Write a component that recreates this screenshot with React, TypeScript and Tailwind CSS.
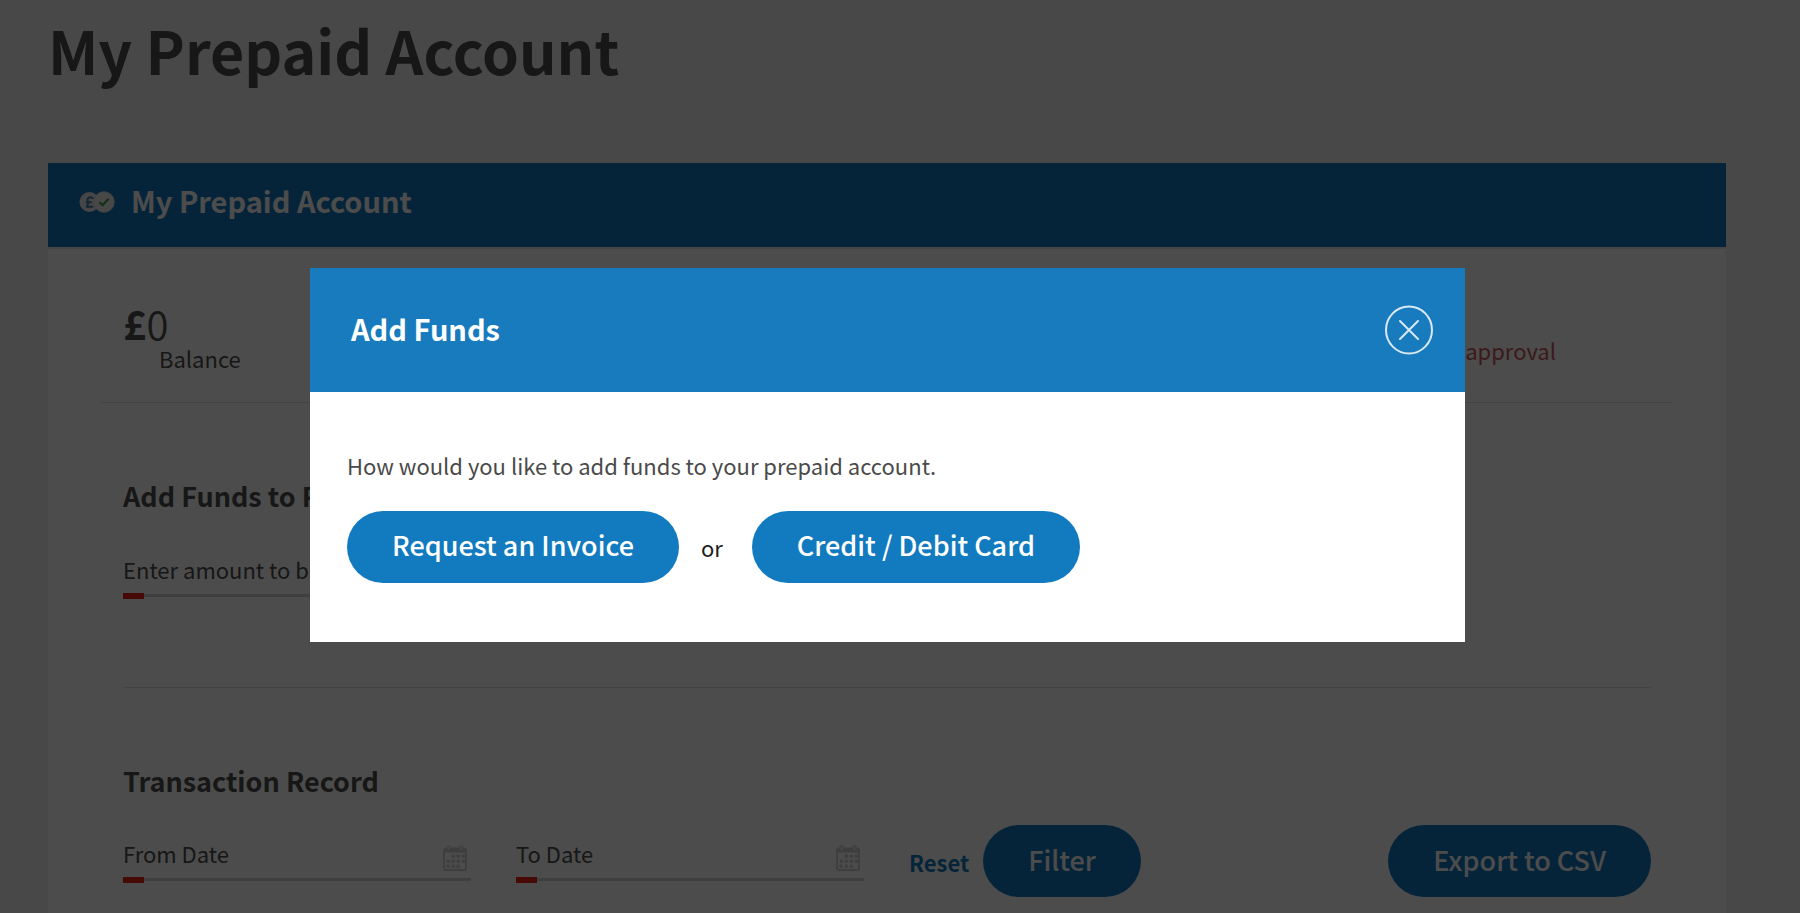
import React from "react";

const pill =
  "h-[72px] rounded-full bg-[#127bbf] px-[45px] pb-[2px] text-[27px] font-medium text-white whitespace-nowrap";

function CoinsIcon() {
  return (
    <svg width="36" height="22" viewBox="0 0 36 22" aria-hidden="true">
      <circle cx="10.5" cy="11" r="10" fill="#ececec" />
      <path
        d="M14 7.6C13.2 6 9 5.6 8.6 8.4c-.2 1.800.6 3 .2 5.200-.2 1-.8 1.800-1.600 2.200h7M6.800 11.200h5.800"
        fill="none"
        stroke="#3f83a8"
        strokeWidth="2"
      />
      <circle cx="25" cy="11" r="10.400" fill="#f2f2f2" stroke="#c4ccd0" strokeWidth="0.800" />
      <path d="M20.400 11.200l3.200 3 6-6.400" fill="none" stroke="#3fa03f" strokeWidth="2.200" />
    </svg>
  );
}

function CalendarIcon() {
  const dots = [
    [9, 10], [14, 10], [19, 10],
    [4, 15], [9, 15], [14, 15], [19, 15],
    [4, 20], [9, 20], [14, 20],
  ];
  return (
    <svg width="24" height="26" viewBox="0 0 24 26" aria-hidden="true">
      <rect x="1" y="3.500" width="22" height="21.500" rx="2" fill="none" stroke="#cfcfcf" strokeWidth="1.800" />
      <path d="M1 3.500h22v4H1z" fill="#cfcfcf" />
      <rect x="4" y="0.800" width="3.500" height="5" rx="1.500" fill="#ececec" stroke="#cfcfcf" />
      <rect x="16.500" y="0.800" width="3.500" height="5" rx="1.500" fill="#ececec" stroke="#cfcfcf" />
      {dots.map(([x, y]) => (
        <rect key={`${x}-${y}`} x={x - 0.5} y={y - 0.5} width="3.400" height="3.400" rx="1" fill="#d4d4d4" />
      ))}
    </svg>
  );
}

function Field({ id, label, calendar }: { id: string; label: string; calendar?: boolean }) {
  return (
    <div className="relative flex w-[348px] items-start border-b-[3px] border-[#d2d2d2]">
      <input
        id={id}
        aria-label={label}
        placeholder={label}
        className="h-10 min-w-0 flex-1 bg-transparent pb-[10px] text-[22px] text-[#4d4d4d] outline-none placeholder:text-[#4d4d4d] placeholder:opacity-100"
      />
      {calendar && (
        <span className="mr-1 mt-[7px] h-[26px]">
          <CalendarIcon />
        </span>
      )}
      <span className="absolute left-0 top-full -mt-px h-[6px] w-[21px] bg-[#e92111]" />
    </div>
  );
}

export default function App() {
  return (
    <div className="relative flex min-h-screen flex-col overflow-hidden bg-[#f0f0f0] pr-[25px] font-['Noto_Sans_CJK_JP','Noto_Sans',sans-serif] text-[22px] text-[#4d4d4d]">
      <main className="flex flex-1 flex-col pl-12 pr-[49px] pt-[14px]">
        <h1 className="text-[59px] font-bold leading-[72px]">My Prepaid Account</h1>
        <section className="mt-[77px] flex-1 bg-white pb-1">
          <header className="flex h-[86px] items-center gap-4 border-b-2 border-[#e8e8e8] bg-[#127bbf] px-[31px] pb-[6px] text-white">
            <CoinsIcon />
            <h2 className="pb-1 text-[29px] font-bold leading-9">My Prepaid Account</h2>
          </header>
          <div className="mx-[53px] flex items-end justify-between border-b border-[#dcdcdc] px-[22px] pb-[31px] pt-[52px]">
            <div>
              <div className="text-[40px] leading-[44px]">
                <strong>£</strong>
                <span className="font-[350]">0</span>
              </div>
              <div className="pl-9 leading-[26px]">Balance</div>
            </div>
            <div className="mb-2 mr-[95px] leading-[26px] text-[#c85757]">£0 awaiting approval</div>
          </div>
          <div className="mx-[75px]">
            <div className="border-b border-[#dcdcdc] pb-[90px] pt-[75px]">
              <h3 className="mb-10 text-[27px] font-bold leading-9">Add Funds to Prepaid Account</h3>
              <Field id="amount" label="Enter amount to be added" />
            </div>
            <h3 className="pt-[75px] text-[27px] font-bold leading-9">Transaction Record</h3>
            <div className="mt-[26px] flex items-start justify-between">
              <div className="flex items-start">
                <div className="flex gap-[45px] pt-[13px]">
                  <Field id="from-date" label="From Date" calendar />
                  <Field id="to-date" label="To Date" calendar />
                </div>
                <a href="#reset" className="ml-[45px] mr-[14px] pt-[22px] font-bold leading-[30px] text-[#127bbf]">
                  Reset
                </a>
                <button className={pill}>Filter</button>
              </div>
              <button className={pill}>Export to CSV</button>
            </div>
          </div>
        </section>
      </main>

      <div className="absolute inset-0 flex items-center justify-center bg-black/70 pb-1 pr-[25px]">
        <div role="dialog" aria-modal="true" aria-labelledby="dialog-title" className="w-full max-w-[1155px] bg-white">
          <header className="flex h-[124px] items-center justify-between bg-[#187bbe] pl-[41px] pr-8 text-white">
            <h2 id="dialog-title" className="pb-1 text-[29px] font-bold leading-9">
              Add Funds
            </h2>
            <button aria-label="Close">
              <svg width="48" height="50" viewBox="0 0 48 50" fill="none" stroke="#d8e9f5" strokeWidth="2">
                <ellipse cx="24" cy="25" rx="23" ry="23.500" />
                <path d="M15 16l18 18M33 16L15 34" strokeLinecap="round" />
              </svg>
            </button>
          </header>
          <div className="px-[37px] pb-[59px] pt-[58px]">
            <p className="leading-[30px] text-[#4a4a4a]">How would you like to add funds to your prepaid account.</p>
            <div className="mt-[31px] flex items-center">
              <button className={pill}>Request an Invoice</button>
              <span className="ml-[22px] mr-[29px] pt-[2px] text-[#1c1c1c]">or</span>
              <button className={pill}>Credit / Debit Card</button>
            </div>
          </div>
        </div>
      </div>
    </div>
  );
}
